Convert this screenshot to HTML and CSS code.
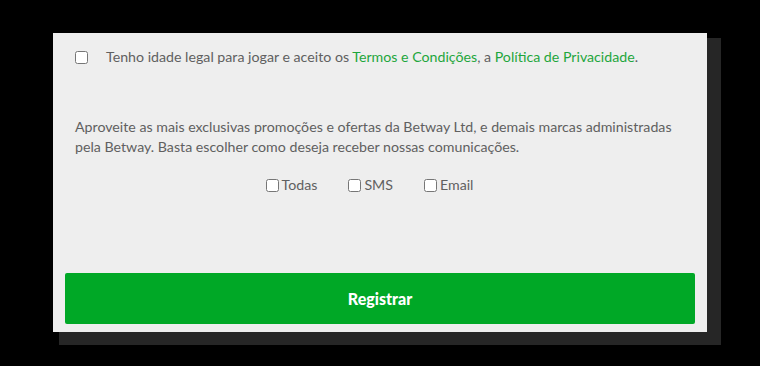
FILE: index.html
```html
<!DOCTYPE html>
<html>
  <head>
    <title>Registro</title>
    <link rel="stylesheet" href="styles.css">
  </head>
  <body>
    <div class="panel">
      <label class="terms-row">
        <input type="checkbox" class="terms-check" />
        <span class="terms-text">Tenho idade legal para jogar e aceito os <a href="#">Termos e Condições</a>, a <a href="#">Política de Privacidade</a>.</span>
      </label>

      <p class="promo-text">
        Aproveite as mais exclusivas promoções e ofertas da Betway Ltd, e demais marcas administradas
        pela Betway. Basta escolher como deseja receber nossas comunicações.
      </p>

      <div class="channels">
        <label class="channel"><input type="checkbox" />Todas</label>
        <label class="channel"><input type="checkbox" />SMS</label>
        <label class="channel"><input type="checkbox" />Email</label>
      </div>

      <button class="register-btn">Registrar</button>
    </div>
  </body>
</html>
```

FILE: styles.css
```css
html {
  background-color: #000000;
}
body {
  margin: 0;
  padding: 33px 0 34px 53px;
  font-family: Lato, "Open Sans", Arial, sans-serif;
  color: #606060;
}
.panel {
  display: flex;
  flex-direction: column;
  width: 654px;
  height: 299px;
  padding: 0 12px 8px;
  box-sizing: border-box;
  background-color: #eeeeee;
  box-shadow: 10px 9px 0 4px #262626;
}
.terms-row {
  display: flex;
  align-items: center;
  margin-top: 14px;
  padding-left: 10px;
  font-size: 14.2px;
  line-height: 20px;
}
.terms-check {
  width: 13px;
  height: 13px;
  margin: 0 18px 0 0;
}
.terms-text a {
  color: #1ea63c;
  text-decoration: none;
}
.promo-text {
  margin: 50px 0 0 10px;
  font-size: 14.2px;
  line-height: 20px;
}
.channels {
  display: flex;
  justify-content: center;
  gap: 31px;
  margin-top: 18px;
  padding-right: 21px;
  font-size: 14.2px;
  line-height: 20px;
}
.channel {
  display: flex;
  align-items: center;
}
.channel input {
  width: 13px;
  height: 13px;
  margin: 0 3px 0 0;
}
.register-btn {
  margin-top: auto;
  height: 51px;
  border: none;
  border-radius: 2px;
  background-color: #00a826;
  color: #ffffff;
  font-family: Lato, Arial, sans-serif;
  font-size: 16px;
  font-weight: 900;
}
```
